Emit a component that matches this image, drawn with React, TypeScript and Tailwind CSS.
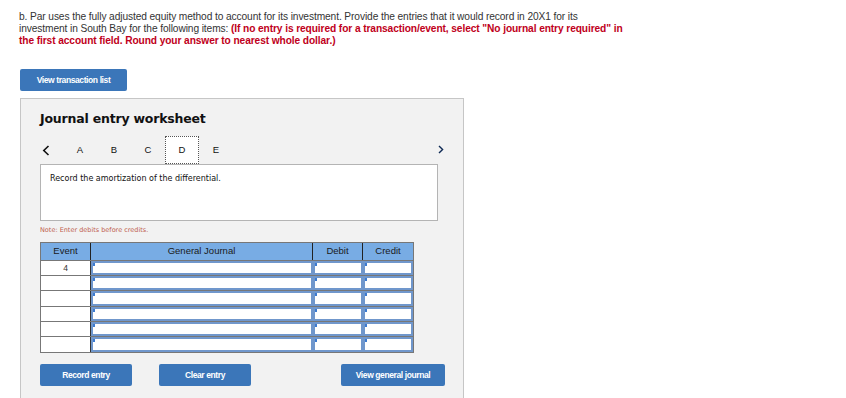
const tabs = ['A', 'B', 'C', 'D', 'E'];
const rowHeights = ['h-[15px]', 'h-[15px]', 'h-[16px]', 'h-[15px]', 'h-[15px]', 'h-[16px]'];

function InputCell({ width }: { width: string }) {
  return (
    <div className={`relative h-full ${width} border-2 border-[#7097cc] bg-white`}>
      <div className="absolute left-0 top-0 h-[3px] w-[2px] bg-[#3d7bd0]" />
    </div>
  );
}

function BlueButton({ label, width }: { label: string; width: string }) {
  return (
    <button
      className={`${width} block h-[22px] rounded-[2px] bg-[#3b76b9] text-[8.5px] font-bold tracking-[-0.4px] text-white`}
    >
      {label}
    </button>
  );
}

export default function App() {
  return (
    <div className="h-[398px] w-[846px] overflow-hidden bg-white font-['Liberation_Sans',Arial,sans-serif]">
      <p className="pl-[19px] pt-[11px] text-[10.2px] leading-[12px] tracking-[-0.1px] text-[#333]">
        b. Par uses the fully adjusted equity method to account for its investment. Provide the entries that it would
        record in 20X1 for its
        <br />
        investment in South Bay for the following items:{' '}
        <span className="font-bold text-[#c00020]">
          (If no entry is required for a transaction/event, select "No journal entry required" in
          <br />
          the first account field. Round your answer to nearest whole dollar.)
        </span>
      </p>

      <div className="ml-[20px] mt-[22px] flex">
        <BlueButton label="View transaction list" width="w-[107px]" />
      </div>

      <div className="ml-[20px] mt-[7px] h-[320px] w-[444px] border border-[#c6c6c6] bg-[#f2f2f2] pl-[19px]">
        <h2 className="mt-[12px] font-['DejaVu_Sans',Verdana,sans-serif] text-[12.5px] font-bold leading-[16px] tracking-[-0.2px] text-[#111]">
          Journal entry worksheet
        </h2>

        <div className="mt-[9px] flex h-[28px] w-[404px] items-center">
          <span className="flex w-[23px] pl-[2px]">
            <svg width="8" height="11" viewBox="0 0 8 11">
              <path d="M6.5 1 L1.8 5.5 L6.5 10" fill="none" stroke="#111" strokeWidth="1.6" />
            </svg>
          </span>
          {tabs.map((t) => (
            <div
              key={t}
              className={`flex h-[28px] w-[34px] items-center justify-center text-[9.5px] text-[#111] ${
                t === 'D' ? 'border border-dotted border-[#555] bg-white' : ''
              }`}
            >
              {t}
            </div>
          ))}
          <span className="ml-auto flex pb-[2px]">
            <svg width="6" height="9" viewBox="0 0 6 9">
              <path d="M1 1 L4.6 4.5 L1 8" fill="none" stroke="#0f2a55" strokeWidth="1.4" />
            </svg>
          </span>
        </div>

        <div className="h-[57px] w-[398px] border border-[#b4b4b4] bg-white px-[9px] pt-[9px] font-['DejaVu_Sans',Verdana,sans-serif] text-[8px] leading-[10px] text-[#111]">
          Record the amortization of the differential.
        </div>

        <p className="mt-[4px] font-['DejaVu_Sans',Verdana,sans-serif] text-[6.5px] leading-[10px] text-[#c0604d]">
          Note: Enter debits before credits.
        </p>

        <div className="mt-[7px] w-[374px] border border-[#777] text-[9.5px]">
          <div className="flex h-[17px] bg-[#78ace4] text-[#1a1a1a]">
            <div className="flex w-[50px] items-center justify-center border-r border-[#222]">Event</div>
            <div className="flex w-[222px] items-center justify-center border-r border-[#222]">General Journal</div>
            <div className="flex w-[50px] items-center justify-center border-r border-[#222]">Debit</div>
            <div className="flex w-[50px] items-center justify-center">Credit</div>
          </div>
          {rowHeights.map((h, i) => (
            <div key={i} className={`flex ${h} border-t border-[#777]`}>
              <div className="flex w-[50px] items-start justify-center border-r border-[#333] bg-white pt-[1px] text-[8.5px] text-[#333]">
                {i === 0 ? '4' : ''}
              </div>
              <InputCell width="w-[222px]" />
              <InputCell width="w-[50px]" />
              <InputCell width="w-[50px]" />
            </div>
          ))}
        </div>

        <div className="mt-[11px] flex w-[405px] items-center">
          <BlueButton label="Record entry" width="w-[92px]" />
          <div className="ml-[27px] flex">
            <BlueButton label="Clear entry" width="w-[92px]" />
          </div>
          <div className="ml-auto flex">
            <BlueButton label="View general journal" width="w-[104px]" />
          </div>
        </div>
      </div>
    </div>
  );
}
